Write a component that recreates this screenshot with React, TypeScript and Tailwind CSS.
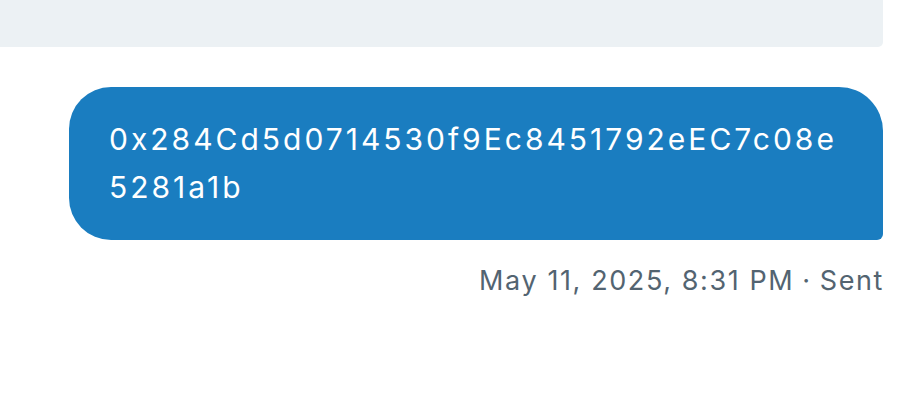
import React from 'react';

const App: React.FC = () => {
  return (
    <div className="w-[920px] h-[404px] bg-white overflow-hidden" style={{ fontFamily: 'Inter, "Noto Sans", sans-serif' }}>
      <div className="pr-[37px] flex flex-col items-end">
        {/* previous message, cut off at top */}
        <div className="w-[883px] h-[47px] bg-[#ecf1f4] rounded-br-[5px]"></div>

        {/* sent message bubble */}
        <div className="mt-[40px] w-[814px] bg-[#1a7dc0] text-white rounded-tl-[42px] rounded-tr-[44px] rounded-bl-[42px] rounded-br-[6px] pl-[40px] pr-[38px] pt-[28px] pb-[29px]">
          <p className="text-[30px] leading-[48px] tracking-[3px] break-all">
            0x284Cd5d0714530f9Ec8451792eEC7c08e5281a1b
          </p>
        </div>

        <div className="mt-[25px] text-[27px] leading-[32px] tracking-[1.6px] text-[#536471] mr-[-1px]">
          May 11, 2025, 8:31 PM<span className="mx-[8px]">·</span>Sent
        </div>
      </div>
    </div>
  );
};

export default App;
